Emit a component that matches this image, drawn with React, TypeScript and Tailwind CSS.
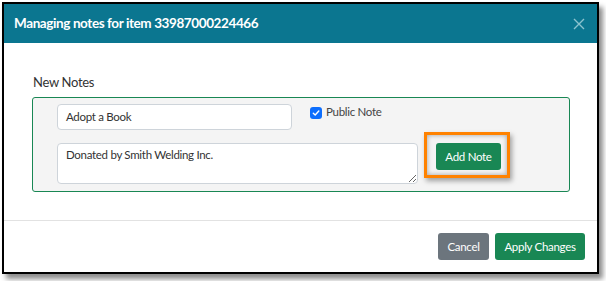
import React from "react";

export default function App() {
  const font = { fontFamily: "Lato, 'Open Sans', sans-serif" };
  return (
    <div className="w-[606px] h-[281px] bg-white overflow-hidden" style={font}>
      <div className="ml-[2px] mt-[2px] w-[597px] h-[272px] border-2 border-black bg-white flex flex-col shadow-[4px_5px_5px_rgba(0,0,0,0.45)]">
        {/* header */}
        <div className="h-[39px] bg-[#0b7690] flex items-center justify-between pl-[10px] pr-[12px] shrink-0">
          <div className="text-white font-bold text-[13.5px] tracking-[-0.4px]">
            Managing notes for item 33987000224466
          </div>
          <svg width="12" height="12" viewBox="0 0 12 12">
            <path d="M1 1L11 11M11 1L1 11" stroke="#8cc3cf" strokeWidth="1.4" fill="none" />
          </svg>
        </div>
        {/* body */}
        <div className="h-[178px] border-b border-[#e2e2e2] shrink-0 pl-[28px] pr-[27px] pt-[29px]">
          <div className="text-[13px] tracking-[-0.3px] leading-[20px] text-[#333] pl-[1px]">New Notes</div>
          <div className="mt-[5px] h-[95px] border border-[#198754] rounded-[3px] bg-[#f4f4f4] pl-[24px] pt-[6px]">
            <div className="flex items-start">
              <div className="w-[235px] h-[26px] bg-white border border-[#ced4da] rounded-[4px] flex items-center pl-[8px] pb-[1px] text-[11.5px] tracking-[-0.3px] text-[#333]">
                Adopt a Book
              </div>
              <div className="ml-[18px] mt-[3px] flex items-center">
                <span className="w-[12px] h-[12px] rounded-[3px] bg-[#0d6efd] flex items-center justify-center">
                  <svg width="8" height="8" viewBox="0 0 8 8">
                    <path d="M1.3 4.2L3.2 6L6.8 2" stroke="white" strokeWidth="1.4" fill="none" strokeLinecap="round" strokeLinejoin="round" />
                  </svg>
                </span>
                <span className="ml-[4px] text-[11.5px] tracking-[-0.3px] leading-[13px] text-[#444] -mt-[4px]">Public Note</span>
              </div>
            </div>
            <div className="mt-[13px] flex items-start">
              <textarea
                readOnly
                defaultValue="Donated by Smith Welding Inc."
                className="w-[361px] h-[41px] bg-white border border-[#ced4da] rounded-[4px] pl-[8px] pt-[3px] text-[11.5px] tracking-[-0.3px] leading-[16px] text-[#333] outline-none resize"
                style={font}
              />
              <div className="ml-[6px] -mt-[11px] w-[86px] h-[46px] border-[3px] border-[#ff8200] pl-[9px] pt-[8px] shadow-[inset_0_0_5px_rgba(0,0,0,0.35),2px_3px_5px_rgba(0,0,0,0.35)]">
                <div className="w-[65px] h-[27px] bg-[#198754] rounded-[3px] text-white text-[11.5px] tracking-[-0.3px] flex items-center justify-center">
                  Add Note
                </div>
              </div>
            </div>
          </div>
        </div>
        {/* footer */}
        <div className="flex-1 flex justify-end items-start pt-[12px] pr-[12px]">
          <div className="w-[51px] h-[27px] bg-[#6c757d] rounded-[3px] text-white text-[11.5px] tracking-[-0.3px] flex items-center justify-center">
            Cancel
          </div>
          <div className="ml-[6px] w-[90px] h-[27px] bg-[#198754] rounded-[3px] text-white text-[11.5px] tracking-[-0.3px] flex items-center justify-center">
            Apply Changes
          </div>
        </div>
      </div>
    </div>
  );
}
